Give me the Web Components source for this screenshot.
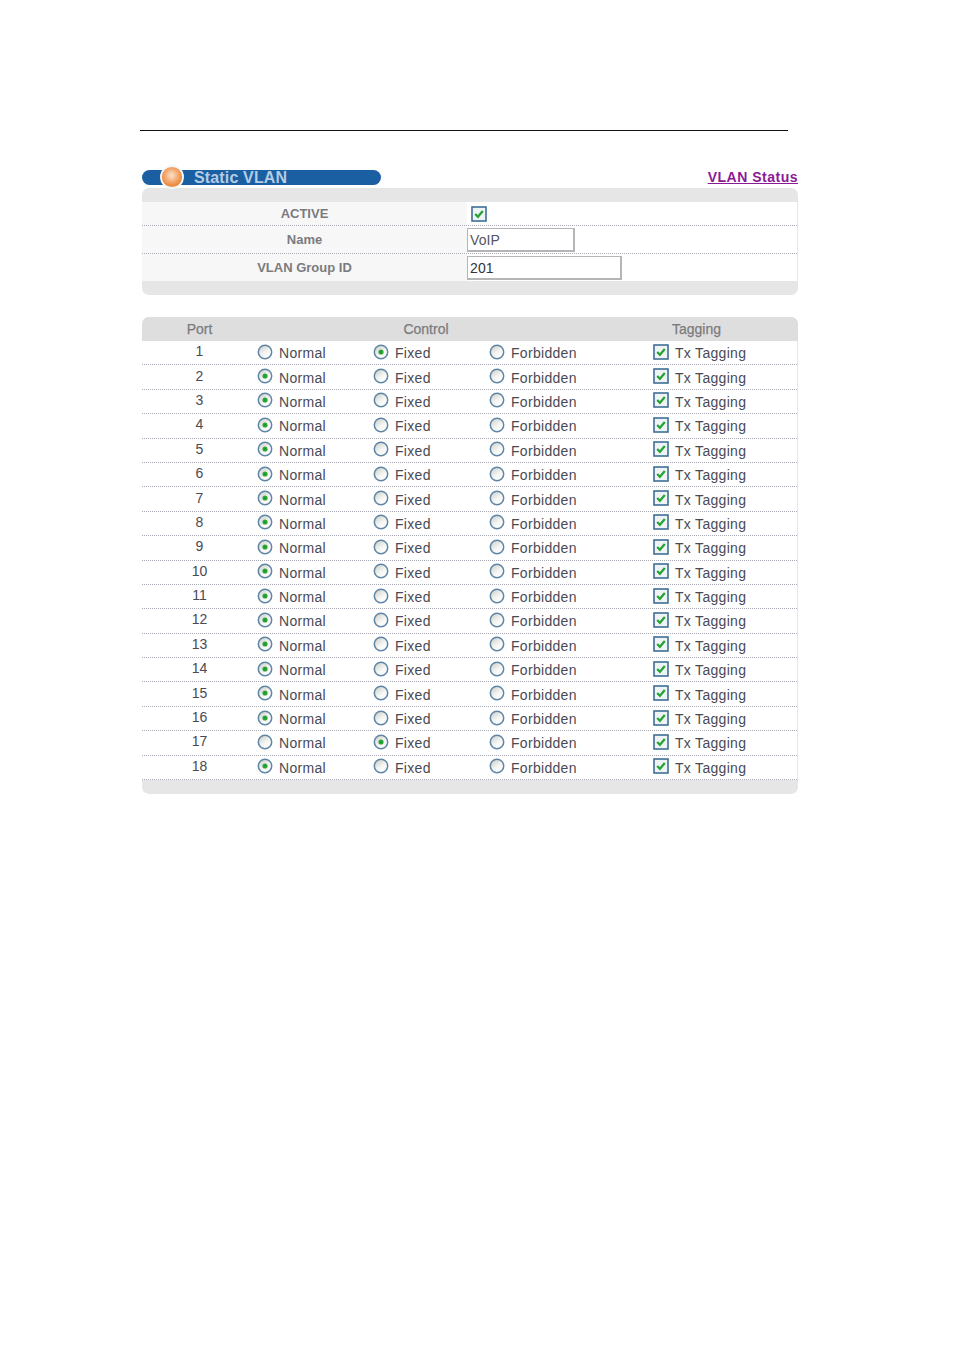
<!DOCTYPE html>
<html><head><meta charset="utf-8"><title>Static VLAN</title>
<style>html,body{margin:0;padding:0;background:#fff;font-family:"Liberation Sans",Arial,sans-serif}</style>
</head><body>
<x-page>
  <x-title-row title-text="Static VLAN" link="VLAN Status"></x-title-row>
  <x-settings-panel></x-settings-panel>
  <x-port-table></x-port-table>
</x-page>
<script>
const RADIO=(on,id)=>`<svg width="16" height="16" viewBox="0 0 16 16" aria-hidden="true"><defs><linearGradient id="rg${id}" x1="0.2" y1="0.1" x2="0.8" y2="0.95"><stop offset="0" stop-color="#d4d4d0"/><stop offset=".55" stop-color="#f6f6f4"/><stop offset="1" stop-color="#ffffff"/></linearGradient></defs><circle cx="8" cy="8" r="6.7" fill="url(#rg${id})" stroke="#5f86a6" stroke-width="1.5"/>${on?'<circle cx="8" cy="8" r="2.6" fill="#2fa83a"/><circle cx="8" cy="8" r="1.2" fill="#1f9a2c"/>':''}</svg>`;
const CHECK=`<svg width="16" height="16" viewBox="0 0 16 16" aria-hidden="true"><rect x="1" y="1" width="14" height="14" fill="#eef3f6" stroke="#3f6f96" stroke-width="1.6"/><path d="M4.2 8 L6.9 10.8 L11.8 5" fill="none" stroke="#23a332" stroke-width="2.2"/></svg>`;
let uid=0;
class Base extends HTMLElement{
  render(html){ if(!this.shadowRoot) this.attachShadow({mode:'open'}); this.shadowRoot.innerHTML=html; }
}
customElements.define('x-page',class extends Base{connectedCallback(){this.render(`<style>
:host{display:block;width:954px;height:1350px;box-sizing:border-box;padding:130px 0 0 140px;overflow:hidden}
.rule{width:648px;height:1px;background:#111}
.body{margin:39px 0 0 2px;width:656px;display:flex;flex-direction:column}
::slotted(x-port-table){margin-top:22px}
</style><div class="rule"></div><div class="body"><slot></slot></div>`)}});
customElements.define('x-radio',class extends Base{connectedCallback(){this.render(`<style>
:host{display:flex;align-items:center;color:#4a4a55;font-size:14px;letter-spacing:.3px;white-space:nowrap}
svg{display:block;flex:none;margin-top:-2px}
span{margin-left:6px;padding-top:1px}
</style>${RADIO(this.hasAttribute('checked'),++uid)}<span><slot></slot></span>`)}});
customElements.define('x-check',class extends Base{connectedCallback(){this.render(`<style>
:host{display:flex;align-items:center;color:#4a4a55;font-size:14px;letter-spacing:.3px;white-space:nowrap}
svg{display:block;flex:none;margin-top:-2px}
span{margin-left:6px;padding-top:1px}
</style>${CHECK}<span><slot></slot></span>`)}});
customElements.define('x-title-row',class extends Base{connectedCallback(){this.render(`<style>
:host{display:flex;justify-content:space-between;align-items:flex-start;height:18px}
.bar{width:239px;height:15px;background:#1a5fa2;border-radius:8px;display:flex;align-items:center;padding-left:17px;box-sizing:border-box}
.ball{flex:none;width:26px;height:26px;margin:0 0 1px 0;border-radius:50%;box-sizing:border-box;border:2px solid #f3f6fa;background:radial-gradient(circle at 48% 42%,#fbe3cf 0,#f6b98a 30%,#ee8f45 62%,#dc7420 100%);transform:scale(.92)}
.t{margin-left:9px;color:#b4cce4;font-weight:700;font-size:16px;letter-spacing:.15px;line-height:15px;white-space:nowrap}
a{color:#8a1a96;font-weight:700;font-size:14px;letter-spacing:.5px;line-height:15px;text-decoration:underline}
</style><div class="bar"><div class="ball"></div><div class="t">${this.getAttribute('title-text')}</div></div><a href="#">${this.getAttribute('link')}</a>`)}});
customElements.define('x-settings-panel',class extends Base{connectedCallback(){this.render(`<style>
:host{display:block;background:#e6e6e6;border-radius:7px;padding:14px 0 14px;box-sizing:border-box;height:107px}
.row{display:grid;grid-template-columns:325px 1fr;background:#fff;box-sizing:border-box;border-bottom:1px dotted #a9a9b4;margin-right:1px}
.row:last-child{border-bottom:0}
.l{background:#f7f7f7;display:flex;align-items:center;justify-content:center;color:#7b7b7f;font-weight:700;font-size:13px}
.v{display:flex;align-items:center}
.r1{height:24px}.r2{height:28px}.r3{height:27px}
.r1 svg{display:block;margin-left:4px}
.inp{box-sizing:border-box;height:24px;border:1px solid #b5b5b5;border-right-width:2px;border-bottom-width:2px;background:#fff;font-size:14px;line-height:22px;padding-left:2px;letter-spacing:.1px}
.a{width:108px;color:#555560}.b{width:155px;color:#33333a}
</style>
<div class="row r1"><div class="l">ACTIVE</div><div class="v">${CHECK}</div></div>
<div class="row r2"><div class="l">Name</div><div class="v"><div class="inp a">VoIP</div></div></div>
<div class="row r3"><div class="l">VLAN Group ID</div><div class="v"><div class="inp b">201</div></div></div>`)}});
customElements.define('x-port-row',class extends Base{connectedCallback(){
  const c=this.getAttribute('control')||'normal';
  const on=k=>c===k?' checked':'';
  this.render(`<style>
:host{display:grid;grid-template-columns:115px 116px 116px 164px 1fr;height:24.4px;box-sizing:border-box;border-bottom:1px dotted #a9a9b4;background:#fff;align-items:center}
.p{text-align:center;color:#4a4a55;font-size:14px;margin-top:-3px}
</style><div class="p">${this.getAttribute('port')}</div>
<x-radio${on('normal')}>Normal</x-radio><x-radio${on('fixed')}>Fixed</x-radio><x-radio${on('forbidden')}>Forbidden</x-radio><x-check>Tx Tagging</x-check>`);
}});
customElements.define('x-port-table',class extends Base{connectedCallback(){
  let rows='';
  for(let i=1;i<=18;i++) rows+=`<x-port-row port="${i}" control="${(i===1||i===17)?'fixed':'normal'}"></x-port-row>`;
  this.render(`<style>
:host{display:block;background:#e6e6e6;border-radius:7px;overflow:hidden;padding-bottom:14px}
.h{display:grid;grid-template-columns:115px 338px 1fr;height:24px;background:#dedede;align-items:center;text-align:center;color:#7b7b7f;font-weight:700;font-size:14px}
.h span{font-weight:400;-webkit-text-stroke:.25px #7b7b7f}
.rows{margin-right:1px}
</style><div class="h"><span>Port</span><span>Control</span><span>Tagging</span></div><div class="rows">${rows}</div>`);
}});
</script>
</body></html>
